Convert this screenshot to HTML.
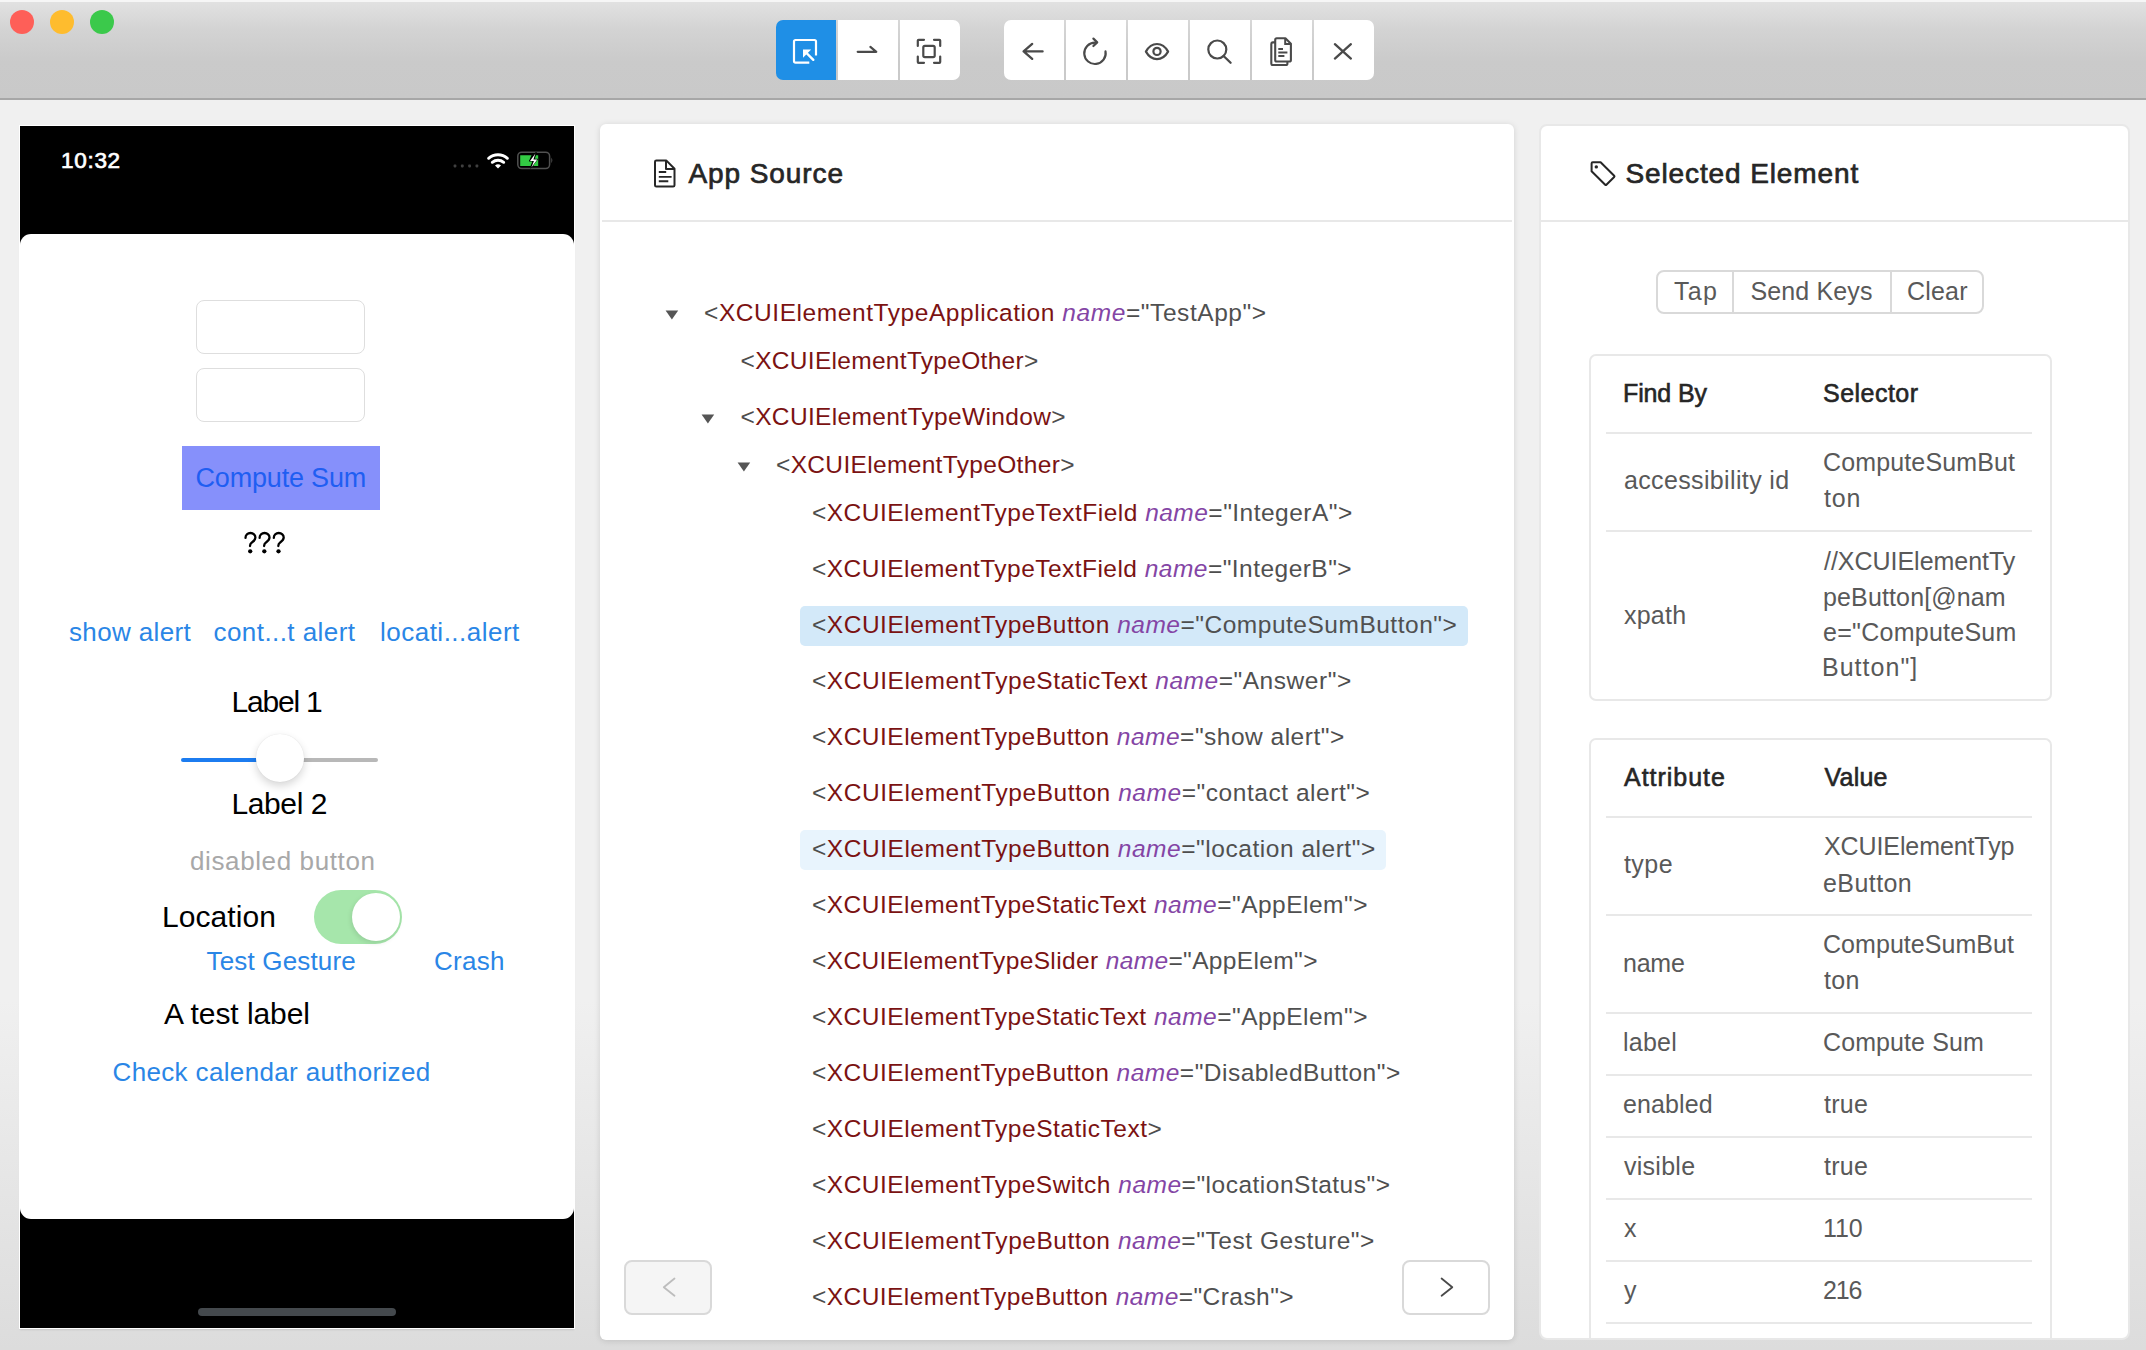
<!DOCTYPE html>
<html><head><meta charset="utf-8"><title>Appium Inspector</title>
<style>
html,body{margin:0;padding:0;}
body{width:2146px;height:1350px;overflow:hidden;position:relative;font-family:"Liberation Sans",sans-serif;
background:linear-gradient(to bottom,#f0f0f0 0px,#f0f0f0 1000px,#dcdcdc 1350px);}
.t{position:absolute;white-space:pre;}
.abs{position:absolute;}
</style></head><body>

<div class="abs" style="left:0;top:0;width:2146px;height:98px;background:linear-gradient(to bottom,#f6f6f6 0px,#f6f6f6 1.5px,#e1e1e1 2.5px,#d3d3d3 30px,#cacaca 62px,#c9c9c9 98px);border-bottom:2px solid #a7a7a7"></div>
<div class="abs" style="left:10px;top:10px;width:24px;height:24px;border-radius:50%;background:#fe5f58"></div>
<div class="abs" style="left:50px;top:10px;width:24px;height:24px;border-radius:50%;background:#febc2e"></div>
<div class="abs" style="left:90px;top:10px;width:24px;height:24px;border-radius:50%;background:#3bc94b"></div>
<div class="abs" style="left:776px;top:20px;width:184px;height:60px;border-radius:7px;overflow:hidden;background:transparent">
<div class="abs" style="left:0;top:0;width:60px;height:60px;background:#1f8fe6"><svg width="60" height="60" viewBox="0 0 60 60" style="position:absolute;left:0;top:0"><path d="M33.3 42.6 H19.6 Q18 42.6 18 41 V21.6 Q18 20 19.6 20 H38.4 Q40 20 40 21.6 V35.6" fill="none" stroke="#fff" stroke-width="2.2"/><path d="M27 29.6 H35.2 L27 37.8 Z" fill="#fff"/><path d="M29.5 32 L37.3 39.8" stroke="#fff" stroke-width="2.4" stroke-linecap="round"/></svg></div>
<div class="abs" style="left:62px;top:0;width:60px;height:60px;background:#fff"><svg width="60" height="60" viewBox="0 0 60 60" style="position:absolute;left:0;top:0"><path d="M19.7 31.8 H38.3 L32.4 26.9" fill="none" stroke="#4a4a4a" stroke-width="2.2" stroke-linecap="round" stroke-linejoin="round"/></svg></div>
<div class="abs" style="left:124px;top:0;width:60px;height:60px;background:#fff"><svg width="60" height="60" viewBox="0 0 60 60" style="position:absolute;left:0;top:0"><path d="M17.8 26 V20.6 Q17.8 19.8 18.6 19.8 H24" fill="none" stroke="#4a4a4a" stroke-width="2.2" stroke-linecap="round"/><path d="M34 19.8 H39.4 Q40.2 19.8 40.2 20.6 V26" fill="none" stroke="#4a4a4a" stroke-width="2.2" stroke-linecap="round"/><path d="M17.8 36.6 V42 Q17.8 42.8 18.6 42.8 H24" fill="none" stroke="#4a4a4a" stroke-width="2.2" stroke-linecap="round"/><path d="M34 42.8 H39.4 Q40.2 42.8 40.2 42 V36.6" fill="none" stroke="#4a4a4a" stroke-width="2.2" stroke-linecap="round"/><rect x="23.3" y="25.8" width="11.4" height="11.4" rx="1.6" fill="none" stroke="#4a4a4a" stroke-width="2.2"/></svg></div>
</div>
<div class="abs" style="left:1004px;top:20px;width:370px;height:60px;border-radius:7px;overflow:hidden">
<div class="abs" style="left:0px;top:0;width:60px;height:60px;background:#fff"><svg width="60" height="60" viewBox="0 0 60 60" style="position:absolute;left:0;top:0"><path d="M19.6 31.4 H38.6 M28.2 23.9 L19.6 31.4 L28.2 38.9" fill="none" stroke="#4a4a4a" stroke-width="2.3" stroke-linecap="round" stroke-linejoin="round"/></svg></div>
<div class="abs" style="left:62px;top:0;width:60px;height:60px;background:#fff"><svg width="60" height="60" viewBox="0 0 60 60" style="position:absolute;left:0;top:0"><path d="M39.5 31.4 A10.7 10.7 0 1 1 28.95 22.6" fill="none" stroke="#4a4a4a" stroke-width="2.2" stroke-linecap="round"/><path d="M27.4 18.6 L31.2 22.4 L27.4 26.0" fill="none" stroke="#4a4a4a" stroke-width="2.2" stroke-linecap="round" stroke-linejoin="round"/></svg></div>
<div class="abs" style="left:124px;top:0;width:60px;height:60px;background:#fff"><svg width="60" height="60" viewBox="0 0 60 60" style="position:absolute;left:0;top:0"><path d="M17.9 31.6 C21 26 25 24 29 24 C33 24 37 26 40.1 31.6 C37 37 33 39.1 29 39.1 C25 39.1 21 37 17.9 31.6 Z" fill="none" stroke="#4a4a4a" stroke-width="2.2" stroke-linejoin="round"/><circle cx="29" cy="31.4" r="3.6" fill="none" stroke="#4a4a4a" stroke-width="2.2"/></svg></div>
<div class="abs" style="left:186px;top:0;width:60px;height:60px;background:#fff"><svg width="60" height="60" viewBox="0 0 60 60" style="position:absolute;left:0;top:0"><circle cx="27.3" cy="29.5" r="9" fill="none" stroke="#4a4a4a" stroke-width="2.2"/><path d="M33.6 36 L40.6 42.8" stroke="#4a4a4a" stroke-width="2.3" stroke-linecap="round"/></svg></div>
<div class="abs" style="left:248px;top:0;width:60px;height:60px;background:#fff"><svg width="60" height="60" viewBox="0 0 60 60" style="position:absolute;left:0;top:0"><path d="M23.2 22.4 H20.9 Q19.3 22.4 19.3 24 V43.4 Q19.3 45 20.9 45 H33.8 Q35.4 45 35.4 43.4 V41.6" fill="none" stroke="#4a4a4a" stroke-width="2.1"/><path d="M24.8 18.3 H33.4 L38.9 23.8 V39.9 Q38.9 41.5 37.3 41.5 H24.8 Q23.2 41.5 23.2 39.9 V19.9 Q23.2 18.3 24.8 18.3 Z" fill="none" stroke="#4a4a4a" stroke-width="2.1" stroke-linejoin="round"/><path d="M33.2 18.5 V24 H38.8" fill="none" stroke="#4a4a4a" stroke-width="2"/><path d="M26.3 28.9 H31 M26.3 32.4 H35.4 M26.3 35.9 H32.4" stroke="#4a4a4a" stroke-width="2"/></svg></div>
<div class="abs" style="left:310px;top:0;width:60px;height:60px;background:#fff"><svg width="60" height="60" viewBox="0 0 60 60" style="position:absolute;left:0;top:0"><path d="M20.9 24.2 L36.9 38.6 M36.9 24.2 L20.9 38.6" stroke="#4a4a4a" stroke-width="2.3" stroke-linecap="round"/></svg></div>
</div>
<div class="abs" style="left:19px;top:125px;width:556px;height:1204px;background:#fff;box-shadow:0 2px 2px -1px rgba(0,0,0,0.10)"></div>
<div class="abs" style="left:20px;top:126px;width:554px;height:1202px;background:#000;overflow:hidden">
<div class="abs" style="left:0;top:108px;width:554px;height:985px;background:#fff;border-radius:11px"></div>
<div class="abs" style="left:178px;top:1182px;width:198px;height:8px;border-radius:4px;background:#44494d"></div>
</div>
<div class="t" id="p_time" style="left:61.00px;top:149.55px;font-size:22.5px;line-height:22.5px;color:#ffffff;font-weight:400;font-style:normal;letter-spacing:0.700px;-webkit-text-stroke:0.70px #ffffff">10:32</div>
<svg class="abs" style="left:450px;top:145px" width="110" height="30" viewBox="0 0 110 30"><g fill="#404040"><rect x="3.6" y="19.6" width="2.8" height="2.8" rx="0.8"/><rect x="10.9" y="19.6" width="2.8" height="2.8" rx="0.8"/><rect x="18.2" y="19.6" width="2.8" height="2.8" rx="0.8"/><rect x="25.5" y="19.6" width="2.8" height="2.8" rx="0.8"/></g><path d="M38.6 13.3 A14.2 14.2 0 0 1 57.4 13.3" fill="none" stroke="#fff" stroke-width="2.9" stroke-linecap="round"/><path d="M42.3 17.3 A8.9 8.9 0 0 1 53.7 17.3" fill="none" stroke="#fff" stroke-width="2.9" stroke-linecap="round"/><path d="M45 20.6 L48 23.4 L51 20.6 A4.4 4.4 0 0 0 45 20.6 Z" fill="#fff"/><rect x="67.8" y="7.2" width="31.8" height="16.4" rx="4" fill="none" stroke="#505050" stroke-width="1.5"/><path d="M101.3 12.6 Q103.4 15.4 101.3 18.2 Z" fill="#505050"/><path d="M70.2 10.2 H81.5 L79 16 H82.5 L80.6 21 H70.2 Z" fill="#33cc44"/><path d="M85.8 10.2 H88.2 V21 H83.2 Z" fill="#33cc44"/><path d="M85.8 7 L78.8 16.6 H82.8 L80.2 24.2 L88.4 13.8 H84.4 L86.8 7 Z" fill="#000"/><path d="M85.4 8.4 L80 16 H83.9 L81.4 22.6 L87.3 14.4 H83.4 Z" fill="#fff"/></svg>
<div class="abs" style="left:196px;top:300px;width:167px;height:52px;border:1px solid #dedede;border-radius:8px;background:#fff"></div>
<div class="abs" style="left:196px;top:368px;width:167px;height:52px;border:1px solid #dedede;border-radius:8px;background:#fff"></div>
<div class="abs" style="left:182px;top:446px;width:198px;height:64px;background:#8690fb"></div>
<div class="t" id="p_compute" style="left:195.50px;top:464.74px;font-size:27px;line-height:27px;color:#1f5ef2;font-weight:400;font-style:normal;letter-spacing:-0.180px">Compute Sum</div>
<svg class="abs" style="left:230px;top:520px" width="70" height="45" viewBox="230 520 70 45"><g transform="translate(250.3 551.3)"><path d="M-4.8 -13.4 C-4.8 -16.5 -2.6 -18.3 0.2 -18.3 C3 -18.3 5.1 -16.4 5.1 -13.7 C5.1 -10.9 3.1 -9.9 1.5 -8.9 C-0.1 -7.9 -0.3 -6.7 -0.3 -5.3" fill="none" stroke="#000" stroke-width="2.3" stroke-linecap="round"/><circle cx="-0.1" cy="0" r="2.15" fill="#000"/></g><g transform="translate(264.4 551.3)"><path d="M-4.8 -13.4 C-4.8 -16.5 -2.6 -18.3 0.2 -18.3 C3 -18.3 5.1 -16.4 5.1 -13.7 C5.1 -10.9 3.1 -9.9 1.5 -8.9 C-0.1 -7.9 -0.3 -6.7 -0.3 -5.3" fill="none" stroke="#000" stroke-width="2.3" stroke-linecap="round"/><circle cx="-0.1" cy="0" r="2.15" fill="#000"/></g><g transform="translate(278.6 551.3)"><path d="M-4.8 -13.4 C-4.8 -16.5 -2.6 -18.3 0.2 -18.3 C3 -18.3 5.1 -16.4 5.1 -13.7 C5.1 -10.9 3.1 -9.9 1.5 -8.9 C-0.1 -7.9 -0.3 -6.7 -0.3 -5.3" fill="none" stroke="#000" stroke-width="2.3" stroke-linecap="round"/><circle cx="-0.1" cy="0" r="2.15" fill="#000"/></g></svg>
<div class="t" id="p_show" style="left:69.00px;top:618.79px;font-size:26px;line-height:26px;color:#2a86e6;font-weight:400;font-style:normal;letter-spacing:0.358px">show alert</div>
<div class="t" id="p_cont" style="left:213.50px;top:618.79px;font-size:26px;line-height:26px;color:#2a86e6;font-weight:400;font-style:normal;letter-spacing:0.433px">cont...t alert</div>
<div class="t" id="p_loc" style="left:380.00px;top:618.79px;font-size:26px;line-height:26px;color:#2a86e6;font-weight:400;font-style:normal;letter-spacing:0.490px">locati...alert</div>
<div class="t" id="p_l1" style="left:231.50px;top:687.20px;font-size:30px;line-height:30px;color:#000000;font-weight:400;font-style:normal;letter-spacing:-1.202px">Label 1</div>
<div class="abs" style="left:181px;top:758px;width:80px;height:4px;border-radius:2px;background:#1c7cf0"></div>
<div class="abs" style="left:300px;top:758px;width:78px;height:4px;border-radius:2px;background:#b8b8b8"></div>
<div class="abs" style="left:256px;top:734px;width:48px;height:48px;border-radius:50%;background:#fff;box-shadow:0 4px 8px rgba(0,0,0,0.16),0 0 1px rgba(0,0,0,0.12)"></div>
<div class="t" id="p_l2" style="left:231.50px;top:789.40px;font-size:30px;line-height:30px;color:#000000;font-weight:400;font-style:normal;letter-spacing:-0.401px">Label 2</div>
<div class="t" id="p_dis" style="left:190.00px;top:847.59px;font-size:26px;line-height:26px;color:#a8a8a8;font-weight:400;font-style:normal;letter-spacing:0.615px">disabled button</div>
<div class="t" id="p_location" style="left:162.00px;top:902.00px;font-size:30px;line-height:30px;color:#000000;font-weight:400;font-style:normal;letter-spacing:0.060px">Location</div>
<div class="abs" style="left:314px;top:890px;width:88px;height:54px;border-radius:27px;background:#a6e6ab"></div>
<div class="abs" style="left:352px;top:893px;width:48px;height:48px;border-radius:50%;background:#fff;box-shadow:-1px 2px 5px rgba(0,0,0,0.10)"></div>
<div class="t" id="p_tg" style="left:206.50px;top:948.39px;font-size:26px;line-height:26px;color:#2a86e6;font-weight:400;font-style:normal;letter-spacing:0.167px">Test Gesture</div>
<div class="t" id="p_crash" style="left:434.00px;top:948.39px;font-size:26px;line-height:26px;color:#2a86e6;font-weight:400;font-style:normal;letter-spacing:0.250px">Crash</div>
<div class="t" id="p_atl" style="left:164.00px;top:999.40px;font-size:30px;line-height:30px;color:#000000;font-weight:400;font-style:normal;letter-spacing:-0.070px">A test label</div>
<div class="t" id="p_cal" style="left:112.50px;top:1058.99px;font-size:26px;line-height:26px;color:#2a86e6;font-weight:400;font-style:normal;letter-spacing:0.351px">Check calendar authorized</div>
<div class="abs" style="left:600px;top:124px;width:914px;height:1216px;background:#fff;border-radius:6px;box-shadow:0 1px 6px rgba(0,0,0,0.13)"></div>
<div class="abs" style="left:602px;top:220px;width:910px;height:2px;background:#e8e8e8"></div>
<svg class="abs" style="left:650px;top:155px" width="32" height="36" viewBox="0 0 32 36"><path d="M6.4 5.4 H16.2 L24.5 13.7 V30.2 Q24.5 31.6 23.1 31.6 H6.4 Q5 31.6 5 30.2 V6.8 Q5 5.4 6.4 5.4 Z" fill="none" stroke="#262626" stroke-width="2" stroke-linejoin="round"/><path d="M16 5.6 V13.9 H24.3" fill="none" stroke="#262626" stroke-width="2" stroke-linejoin="round"/><path d="M8.8 17 H16.2 M8.8 21.9 H21.6 M8.8 26.3 H18.3" stroke="#262626" stroke-width="1.9"/></svg>
<div class="t" id="h_app" style="left:688.50px;top:160.09px;font-size:28px;line-height:28px;color:#262626;font-weight:400;font-style:normal;letter-spacing:0.907px;-webkit-text-stroke:0.70px #262626">App Source</div>
<div class="abs" style="left:800px;top:606px;width:668px;height:40px;border-radius:5px;background:#d3e9f9"></div>
<div class="abs" style="left:800px;top:830px;width:586px;height:40px;border-radius:5px;background:#e8f4fd"></div>
<div class="t" id="r0" style="left:704.00px;top:301.26px;font-size:24.5px;line-height:24.5px;color:#7b1212;font-weight:400;font-style:normal;letter-spacing:0.566px"><span style="color:#4d4d4d">&lt;</span><span style="color:#7b1212">XCUIElementTypeApplication</span> <span style="color:#8445a5;font-style:italic">name</span><span style="color:#4d4d4d">=</span><span style="color:#505050">&quot;TestApp&quot;</span><span style="color:#4d4d4d">&gt;</span></div>
<svg class="abs" style="left:664.8px;top:310px" width="14" height="10" viewBox="0 0 14 10"><path d="M0.6 0.6 H13.2 L6.9 9.4 Z" fill="#555"/></svg>
<div class="t" id="r1" style="left:740.50px;top:349.26px;font-size:24.5px;line-height:24.5px;color:#7b1212;font-weight:400;font-style:normal;letter-spacing:0.304px"><span style="color:#4d4d4d">&lt;</span><span style="color:#7b1212">XCUIElementTypeOther</span><span style="color:#4d4d4d">&gt;</span></div>
<div class="t" id="r2" style="left:740.50px;top:405.26px;font-size:24.5px;line-height:24.5px;color:#7b1212;font-weight:400;font-style:normal;letter-spacing:0.353px"><span style="color:#4d4d4d">&lt;</span><span style="color:#7b1212">XCUIElementTypeWindow</span><span style="color:#4d4d4d">&gt;</span></div>
<svg class="abs" style="left:700.7px;top:414px" width="14" height="10" viewBox="0 0 14 10"><path d="M0.6 0.6 H13.2 L6.9 9.4 Z" fill="#555"/></svg>
<div class="t" id="r3" style="left:776.00px;top:453.26px;font-size:24.5px;line-height:24.5px;color:#7b1212;font-weight:400;font-style:normal;letter-spacing:0.334px"><span style="color:#4d4d4d">&lt;</span><span style="color:#7b1212">XCUIElementTypeOther</span><span style="color:#4d4d4d">&gt;</span></div>
<svg class="abs" style="left:737.0px;top:462px" width="14" height="10" viewBox="0 0 14 10"><path d="M0.6 0.6 H13.2 L6.9 9.4 Z" fill="#555"/></svg>
<div class="t" id="r4" style="left:812.00px;top:501.26px;font-size:24.5px;line-height:24.5px;color:#7b1212;font-weight:400;font-style:normal;letter-spacing:0.478px"><span style="color:#4d4d4d">&lt;</span><span style="color:#7b1212">XCUIElementTypeTextField</span> <span style="color:#8445a5;font-style:italic">name</span><span style="color:#4d4d4d">=</span><span style="color:#505050">&quot;IntegerA&quot;</span><span style="color:#4d4d4d">&gt;</span></div>
<div class="t" id="r5" style="left:812.00px;top:557.26px;font-size:24.5px;line-height:24.5px;color:#7b1212;font-weight:400;font-style:normal;letter-spacing:0.463px"><span style="color:#4d4d4d">&lt;</span><span style="color:#7b1212">XCUIElementTypeTextField</span> <span style="color:#8445a5;font-style:italic">name</span><span style="color:#4d4d4d">=</span><span style="color:#505050">&quot;IntegerB&quot;</span><span style="color:#4d4d4d">&gt;</span></div>
<div class="t" id="r6" style="left:812.00px;top:613.26px;font-size:24.5px;line-height:24.5px;color:#7b1212;font-weight:400;font-style:normal;letter-spacing:0.507px"><span style="color:#4d4d4d">&lt;</span><span style="color:#7b1212">XCUIElementTypeButton</span> <span style="color:#8445a5;font-style:italic">name</span><span style="color:#4d4d4d">=</span><span style="color:#505050">&quot;ComputeSumButton&quot;</span><span style="color:#4d4d4d">&gt;</span></div>
<div class="t" id="r7" style="left:812.00px;top:669.26px;font-size:24.5px;line-height:24.5px;color:#7b1212;font-weight:400;font-style:normal;letter-spacing:0.533px"><span style="color:#4d4d4d">&lt;</span><span style="color:#7b1212">XCUIElementTypeStaticText</span> <span style="color:#8445a5;font-style:italic">name</span><span style="color:#4d4d4d">=</span><span style="color:#505050">&quot;Answer&quot;</span><span style="color:#4d4d4d">&gt;</span></div>
<div class="t" id="r8" style="left:812.00px;top:725.26px;font-size:24.5px;line-height:24.5px;color:#7b1212;font-weight:400;font-style:normal;letter-spacing:0.492px"><span style="color:#4d4d4d">&lt;</span><span style="color:#7b1212">XCUIElementTypeButton</span> <span style="color:#8445a5;font-style:italic">name</span><span style="color:#4d4d4d">=</span><span style="color:#505050">&quot;show alert&quot;</span><span style="color:#4d4d4d">&gt;</span></div>
<div class="t" id="r9" style="left:812.00px;top:781.26px;font-size:24.5px;line-height:24.5px;color:#7b1212;font-weight:400;font-style:normal;letter-spacing:0.550px"><span style="color:#4d4d4d">&lt;</span><span style="color:#7b1212">XCUIElementTypeButton</span> <span style="color:#8445a5;font-style:italic">name</span><span style="color:#4d4d4d">=</span><span style="color:#505050">&quot;contact alert&quot;</span><span style="color:#4d4d4d">&gt;</span></div>
<div class="t" id="r10" style="left:812.00px;top:837.26px;font-size:24.5px;line-height:24.5px;color:#7b1212;font-weight:400;font-style:normal;letter-spacing:0.535px"><span style="color:#4d4d4d">&lt;</span><span style="color:#7b1212">XCUIElementTypeButton</span> <span style="color:#8445a5;font-style:italic">name</span><span style="color:#4d4d4d">=</span><span style="color:#505050">&quot;location alert&quot;</span><span style="color:#4d4d4d">&gt;</span></div>
<div class="t" id="r11" style="left:812.00px;top:893.26px;font-size:24.5px;line-height:24.5px;color:#7b1212;font-weight:400;font-style:normal;letter-spacing:0.485px"><span style="color:#4d4d4d">&lt;</span><span style="color:#7b1212">XCUIElementTypeStaticText</span> <span style="color:#8445a5;font-style:italic">name</span><span style="color:#4d4d4d">=</span><span style="color:#505050">&quot;AppElem&quot;</span><span style="color:#4d4d4d">&gt;</span></div>
<div class="t" id="r12" style="left:812.00px;top:949.26px;font-size:24.5px;line-height:24.5px;color:#7b1212;font-weight:400;font-style:normal;letter-spacing:0.364px"><span style="color:#4d4d4d">&lt;</span><span style="color:#7b1212">XCUIElementTypeSlider</span> <span style="color:#8445a5;font-style:italic">name</span><span style="color:#4d4d4d">=</span><span style="color:#505050">&quot;AppElem&quot;</span><span style="color:#4d4d4d">&gt;</span></div>
<div class="t" id="r13" style="left:812.00px;top:1005.26px;font-size:24.5px;line-height:24.5px;color:#7b1212;font-weight:400;font-style:normal;letter-spacing:0.485px"><span style="color:#4d4d4d">&lt;</span><span style="color:#7b1212">XCUIElementTypeStaticText</span> <span style="color:#8445a5;font-style:italic">name</span><span style="color:#4d4d4d">=</span><span style="color:#505050">&quot;AppElem&quot;</span><span style="color:#4d4d4d">&gt;</span></div>
<div class="t" id="r14" style="left:812.00px;top:1061.26px;font-size:24.5px;line-height:24.5px;color:#7b1212;font-weight:400;font-style:normal;letter-spacing:0.483px"><span style="color:#4d4d4d">&lt;</span><span style="color:#7b1212">XCUIElementTypeButton</span> <span style="color:#8445a5;font-style:italic">name</span><span style="color:#4d4d4d">=</span><span style="color:#505050">&quot;DisabledButton&quot;</span><span style="color:#4d4d4d">&gt;</span></div>
<div class="t" id="r15" style="left:812.00px;top:1117.26px;font-size:24.5px;line-height:24.5px;color:#7b1212;font-weight:400;font-style:normal;letter-spacing:0.520px"><span style="color:#4d4d4d">&lt;</span><span style="color:#7b1212">XCUIElementTypeStaticText</span><span style="color:#4d4d4d">&gt;</span></div>
<div class="t" id="r16" style="left:812.00px;top:1173.26px;font-size:24.5px;line-height:24.5px;color:#7b1212;font-weight:400;font-style:normal;letter-spacing:0.499px"><span style="color:#4d4d4d">&lt;</span><span style="color:#7b1212">XCUIElementTypeSwitch</span> <span style="color:#8445a5;font-style:italic">name</span><span style="color:#4d4d4d">=</span><span style="color:#505050">&quot;locationStatus&quot;</span><span style="color:#4d4d4d">&gt;</span></div>
<div class="t" id="r17" style="left:812.00px;top:1229.26px;font-size:24.5px;line-height:24.5px;color:#7b1212;font-weight:400;font-style:normal;letter-spacing:0.539px"><span style="color:#4d4d4d">&lt;</span><span style="color:#7b1212">XCUIElementTypeButton</span> <span style="color:#8445a5;font-style:italic">name</span><span style="color:#4d4d4d">=</span><span style="color:#505050">&quot;Test Gesture&quot;</span><span style="color:#4d4d4d">&gt;</span></div>
<div class="t" id="r18" style="left:812.00px;top:1285.26px;font-size:24.5px;line-height:24.5px;color:#7b1212;font-weight:400;font-style:normal;letter-spacing:0.442px"><span style="color:#4d4d4d">&lt;</span><span style="color:#7b1212">XCUIElementTypeButton</span> <span style="color:#8445a5;font-style:italic">name</span><span style="color:#4d4d4d">=</span><span style="color:#505050">&quot;Crash&quot;</span><span style="color:#4d4d4d">&gt;</span></div>
<div class="abs" style="left:624px;top:1260px;width:84px;height:51px;border:2px solid #d9d9d9;border-radius:8px;background:#f5f5f5"></div>
<svg class="abs" style="left:660px;top:1275px" width="20" height="24" viewBox="0 0 20 24"><path d="M14.5 3.5 L3.8 12.2 L14.5 20.8" fill="none" stroke="#bdbdbd" stroke-width="1.8" stroke-linecap="round" stroke-linejoin="round"/></svg>
<div class="abs" style="left:1402px;top:1260px;width:84px;height:51px;border:2px solid #d9d9d9;border-radius:8px;background:#fff"></div>
<svg class="abs" style="left:1437px;top:1275px" width="20" height="24" viewBox="0 0 20 24"><path d="M4.6 3.5 L15.3 12.2 L4.6 20.8" fill="none" stroke="#4a4a4a" stroke-width="1.8" stroke-linecap="round" stroke-linejoin="round"/></svg>
<div class="abs" style="left:1539px;top:124px;width:587px;height:1212px;background:#fff;border:2px solid #e8e8e8;border-radius:8px"></div>
<div class="abs" style="left:1541px;top:220px;width:587px;height:2px;background:#e8e8e8"></div>
<svg class="abs" style="left:1586px;top:157px" width="34" height="34" viewBox="0 0 34 34"><path d="M6.8 5.2 H14.6 L28.2 18.8 Q28.8 19.4 28.2 20 L20.4 27.8 Q19.8 28.4 19.2 27.8 L5.6 14.2 V6.4 Q5.6 5.2 6.8 5.2 Z" fill="none" stroke="#262626" stroke-width="2" stroke-linejoin="round"/><circle cx="10.3" cy="9.9" r="1.7" fill="#262626"/></svg>
<div class="t" id="h_sel" style="left:1625.50px;top:160.29px;font-size:28px;line-height:28px;color:#262626;font-weight:400;font-style:normal;letter-spacing:0.883px;-webkit-text-stroke:0.70px #262626">Selected Element</div>
<div class="abs" style="left:1656px;top:270px;width:324px;height:40px;border:2px solid #d9d9d9;border-radius:8px;background:#fff"></div>
<div class="abs" style="left:1732px;top:272px;width:2px;height:40px;background:#d9d9d9"></div>
<div class="abs" style="left:1890px;top:272px;width:2px;height:40px;background:#d9d9d9"></div>
<div class="t" id="b_tap" style="left:1674.00px;top:279.13px;font-size:25px;line-height:25px;color:#595959;font-weight:400;font-style:normal;letter-spacing:1.300px">Tap</div>
<div class="t" id="b_send" style="left:1750.50px;top:279.13px;font-size:25px;line-height:25px;color:#595959;font-weight:400;font-style:normal;letter-spacing:0.126px">Send Keys</div>
<div class="t" id="b_clear" style="left:1907.00px;top:279.13px;font-size:25px;line-height:25px;color:#595959;font-weight:400;font-style:normal;letter-spacing:0.200px">Clear</div>
<div class="abs" style="left:1589px;top:354px;width:459px;height:343px;border:2px solid #e8e8e8;border-radius:7px"></div>
<div class="abs" style="left:1606px;top:432px;width:426px;height:2px;background:#e8e8e8"></div>
<div class="abs" style="left:1606px;top:530px;width:426px;height:2px;background:#e8e8e8"></div>
<div class="t" id="t_findby" style="left:1623.00px;top:380.53px;font-size:25px;line-height:25px;color:#262626;font-weight:400;font-style:normal;letter-spacing:-0.135px;-webkit-text-stroke:0.60px #262626">Find By</div>
<div class="t" id="t_selector" style="left:1823.00px;top:380.63px;font-size:25px;line-height:25px;color:#262626;font-weight:400;font-style:normal;letter-spacing:0.482px;-webkit-text-stroke:0.60px #262626">Selector</div>
<div class="t" id="t_accid" style="left:1624.00px;top:468.23px;font-size:25px;line-height:25px;color:#595959;font-weight:400;font-style:normal;letter-spacing:0.357px">accessibility id</div>
<div class="t" id="t_csb1" style="left:1823.00px;top:450.33px;font-size:25px;line-height:25px;color:#595959;font-weight:400;font-style:normal;letter-spacing:0.137px">ComputeSumBut</div>
<div class="t" id="t_csb2" style="left:1824.00px;top:486.03px;font-size:25px;line-height:25px;color:#595959;font-weight:400;font-style:normal;letter-spacing:0.844px">ton</div>
<div class="t" id="t_xpath" style="left:1624.00px;top:602.83px;font-size:25px;line-height:25px;color:#595959;font-weight:400;font-style:normal;letter-spacing:0.219px">xpath</div>
<div class="t" id="t_xp1" style="left:1824.00px;top:548.83px;font-size:25px;line-height:25px;color:#595959;font-weight:400;font-style:normal;letter-spacing:-0.026px">//XCUIElementTy</div>
<div class="t" id="t_xp2" style="left:1823.00px;top:584.83px;font-size:25px;line-height:25px;color:#595959;font-weight:400;font-style:normal;letter-spacing:0.137px">peButton[@nam</div>
<div class="t" id="t_xp3" style="left:1823.00px;top:619.83px;font-size:25px;line-height:25px;color:#595959;font-weight:400;font-style:normal;letter-spacing:0.260px">e="ComputeSum</div>
<div class="t" id="t_xp4" style="left:1822.00px;top:654.83px;font-size:25px;line-height:25px;color:#595959;font-weight:400;font-style:normal;letter-spacing:1.022px">Button"]</div>
<div class="abs" style="left:1589px;top:738px;width:459px;height:598px;border:2px solid #e8e8e8;border-bottom:0;border-radius:7px 7px 0 0"></div>
<div class="abs" style="left:1606px;top:816px;width:426px;height:2px;background:#e8e8e8"></div>
<div class="abs" style="left:1606px;top:914px;width:426px;height:2px;background:#e8e8e8"></div>
<div class="abs" style="left:1606px;top:1012px;width:426px;height:2px;background:#e8e8e8"></div>
<div class="abs" style="left:1606px;top:1074px;width:426px;height:2px;background:#e8e8e8"></div>
<div class="abs" style="left:1606px;top:1136px;width:426px;height:2px;background:#e8e8e8"></div>
<div class="abs" style="left:1606px;top:1198px;width:426px;height:2px;background:#e8e8e8"></div>
<div class="abs" style="left:1606px;top:1260px;width:426px;height:2px;background:#e8e8e8"></div>
<div class="abs" style="left:1606px;top:1322px;width:426px;height:2px;background:#e8e8e8"></div>
<div class="t" id="t_attr" style="left:1624.00px;top:765.23px;font-size:25px;line-height:25px;color:#262626;font-weight:400;font-style:normal;letter-spacing:0.969px;-webkit-text-stroke:0.60px #262626">Attribute</div>
<div class="t" id="t_value" style="left:1824.50px;top:765.23px;font-size:25px;line-height:25px;color:#262626;font-weight:400;font-style:normal;letter-spacing:0.219px;-webkit-text-stroke:0.60px #262626">Value</div>
<div class="t" id="t_type" style="left:1624.00px;top:852.23px;font-size:25px;line-height:25px;color:#595959;font-weight:400;font-style:normal;letter-spacing:0.427px">type</div>
<div class="t" id="t_type1" style="left:1824.00px;top:833.93px;font-size:25px;line-height:25px;color:#595959;font-weight:400;font-style:normal;letter-spacing:-0.098px">XCUIElementTyp</div>
<div class="t" id="t_type2" style="left:1823.00px;top:870.73px;font-size:25px;line-height:25px;color:#595959;font-weight:400;font-style:normal;letter-spacing:0.426px">eButton</div>
<div class="t" id="t_name" style="left:1623.00px;top:950.63px;font-size:25px;line-height:25px;color:#595959;font-weight:400;font-style:normal;letter-spacing:-0.240px">name</div>
<div class="t" id="t_name1" style="left:1823.00px;top:932.13px;font-size:25px;line-height:25px;color:#595959;font-weight:400;font-style:normal;letter-spacing:0.052px">ComputeSumBut</div>
<div class="t" id="t_name2" style="left:1824.00px;top:968.33px;font-size:25px;line-height:25px;color:#595959;font-weight:400;font-style:normal;letter-spacing:0.344px">ton</div>
<div class="t" id="t_k_label" style="left:1623.00px;top:1030.33px;font-size:25px;line-height:25px;color:#595959;font-weight:400;font-style:normal;letter-spacing:0.219px">label</div>
<div class="t" id="t_v_label" style="left:1823.00px;top:1030.33px;font-size:25px;line-height:25px;color:#595959;font-weight:400;font-style:normal;letter-spacing:0.094px">Compute Sum</div>
<div class="t" id="t_k_enabled" style="left:1623.00px;top:1092.43px;font-size:25px;line-height:25px;color:#595959;font-weight:400;font-style:normal;letter-spacing:0.093px">enabled</div>
<div class="t" id="t_v_enabled" style="left:1824.00px;top:1092.43px;font-size:25px;line-height:25px;color:#595959;font-weight:400;font-style:normal;letter-spacing:0.261px">true</div>
<div class="t" id="t_k_visible" style="left:1624.00px;top:1154.03px;font-size:25px;line-height:25px;color:#595959;font-weight:400;font-style:normal;letter-spacing:0.261px">visible</div>
<div class="t" id="t_v_visible" style="left:1824.00px;top:1154.03px;font-size:25px;line-height:25px;color:#595959;font-weight:400;font-style:normal;letter-spacing:0.261px">true</div>
<div class="t" id="t_k_x" style="left:1624.00px;top:1215.73px;font-size:25px;line-height:25px;color:#595959;font-weight:400;font-style:normal;letter-spacing:0.219px">x</div>
<div class="t" id="t_v_x" style="left:1823.00px;top:1215.73px;font-size:25px;line-height:25px;color:#595959;font-weight:400;font-style:normal;letter-spacing:-0.156px">110</div>
<div class="t" id="t_k_y" style="left:1624.00px;top:1278.03px;font-size:25px;line-height:25px;color:#595959;font-weight:400;font-style:normal;letter-spacing:0.219px">y</div>
<div class="t" id="t_v_y" style="left:1823.00px;top:1278.03px;font-size:25px;line-height:25px;color:#595959;font-weight:400;font-style:normal;letter-spacing:-1.156px">216</div>
</body></html>
